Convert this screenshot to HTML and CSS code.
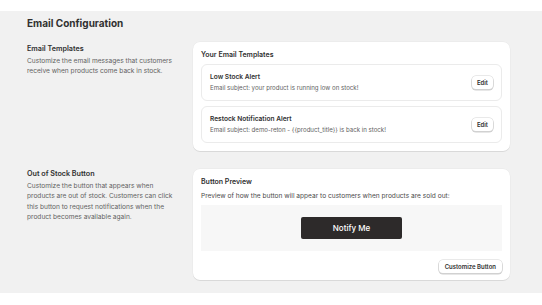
FILE: index.html
```html
<!DOCTYPE html>
<html>
<head>
<meta charset="utf-8">
<link rel="stylesheet" href="styles.css">
</head>
<body>
<main class="page">
  <h1 class="page-title">Email Configuration</h1>
  <section class="section section-templates">
    <div class="section-info">
      <h2 class="section-heading">Email Templates</h2>
      <p class="section-desc">Customize the email messages that customers receive when products come back in stock.</p>
    </div>
    <div class="card">
      <h3 class="card-title">Your Email Templates</h3>
      <div class="template-list">
        <div class="template">
          <div class="template-text">
            <div class="template-name">Low Stock Alert</div>
            <div class="template-subject">Email subject: your product is running low on stock!</div>
          </div>
          <button class="btn btn-small">Edit</button>
        </div>
        <div class="template">
          <div class="template-text">
            <div class="template-name">Restock Notification Alert</div>
            <div class="template-subject">Email subject: demo-reton - {{product_title}} is back in stock!</div>
          </div>
          <button class="btn btn-small">Edit</button>
        </div>
      </div>
    </div>
  </section>
  <section class="section section-button">
    <div class="section-info">
      <h2 class="section-heading">Out of Stock Button</h2>
      <p class="section-desc">Customize the button that appears when products are out of stock. Customers can click this button to request notifications when the product becomes available again.</p>
    </div>
    <div class="card">
      <h3 class="card-title">Button Preview</h3>
      <p class="card-desc">Preview of how the button will appear to customers when products are sold out:</p>
      <div class="preview">
        <button class="notify-btn">Notify Me</button>
      </div>
      <div class="card-actions">
        <button class="btn">Customize Button</button>
      </div>
    </div>
  </section>
</main>
</body>
</html>
```

FILE: styles.css
```css
* { box-sizing: border-box; }
html, body {
  margin: 0;
  padding: 0;
  background: #ffffff;
}
body {
  font-family: Inter, "Noto Sans", sans-serif;
  color: #303030;
}
.page {
  margin-top: 11px;
  height: 282px;
  background: #f1f1f1;
  padding: 5px 32px 0 27px;
}
.page-title {
  margin: 0;
  font-size: 10px;
  line-height: 14px;
  font-weight: 700;
  color: #303030;
}
.section {
  display: grid;
  grid-template-columns: 150px 1fr;
  column-gap: 16px;
}
.section-templates { margin-top: 12px; }
.section-button { margin-top: 18px; }
.section-info { padding-top: 2px; }
.section-button .section-info { padding-top: 0; }
.section-heading {
  margin: 0;
  font-size: 7.2px;
  line-height: 10px;
  font-weight: 600;
  color: #303030;
}
.section-desc {
  margin: 2px 0 0;
  font-size: 6.6px;
  line-height: 10.4px;
  color: #616161;
}
.card {
  background: #ffffff;
  border-radius: 7px;
  box-shadow: 0 1px 0 rgba(0,0,0,0.08), 0 0 0 0.5px rgba(0,0,0,0.04);
  padding: 8px;
}
.card-title {
  margin: 0;
  font-size: 7px;
  line-height: 10px;
  font-weight: 600;
  color: #303030;
}
.template-list {
  margin-top: 4px;
  display: flex;
  flex-direction: column;
  gap: 5px;
}
.template {
  border: 1px solid #ebebeb;
  border-radius: 6px;
  padding: 7px 8px 7px 8px;
  display: flex;
  align-items: center;
  justify-content: space-between;
}
.template-name {
  font-size: 6.6px;
  line-height: 10px;
  font-weight: 600;
  color: #303030;
}
.template-subject {
  margin-top: 1px;
  font-size: 6.1px;
  line-height: 10px;
  color: #616161;
}
.btn {
  font-family: inherit;
  background: #ffffff;
  border: 0;
  border-radius: 4px;
  box-shadow: 0 0 0 0.6px #d4d4d4, 0 1px 0 0.6px #cfcfcf;
  font-size: 6px;
  font-weight: 600;
  color: #303030;
  height: 13px;
  padding: 0 6px;
  line-height: 13px;
  cursor: pointer;
}
.btn-small { padding: 0 5px; }
.card-desc {
  margin: 4px 0 0;
  font-size: 6.6px;
  line-height: 10px;
  color: #4a4a4a;
}
.preview {
  margin-top: 4px;
  background: #f7f7f7;
  height: 46px;
  display: flex;
  align-items: center;
  justify-content: center;
}
.notify-btn {
  font-family: inherit;
  width: 101px;
  height: 22px;
  background: #2d2a2a;
  color: #ffffff;
  border: 0;
  border-radius: 2px;
  font-size: 8px;
  font-weight: 500;
}
.card-actions {
  margin-top: 9px;
  display: flex;
  justify-content: flex-end;
}
.section-button .card { padding-bottom: 7px; }
```
